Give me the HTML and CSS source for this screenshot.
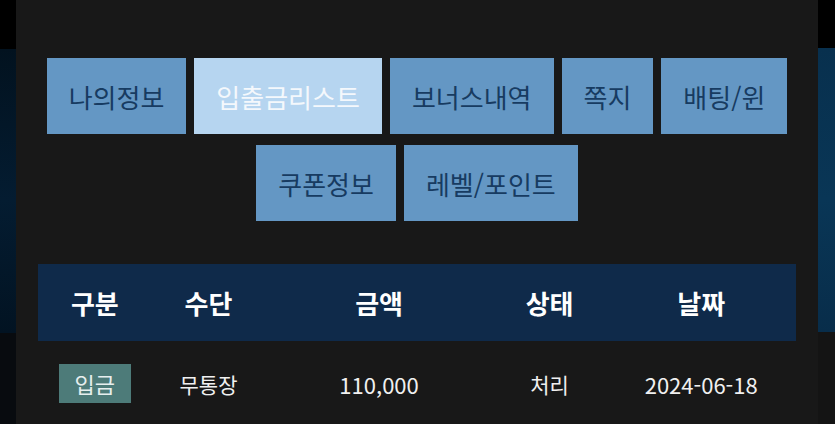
FILE: index.html
```html
<!DOCTYPE html>
<html lang="ko">
<head>
	<meta charset="UTF-8">
	<title>마이페이지</title>
	<link rel="stylesheet" href="styles.css">
</head>
<body>
	<div id="main_frame">
		<div class="tabs">
			<a class="tab">나의정보</a>
			<a class="tab on">입출금리스트</a>
			<a class="tab">보너스내역</a>
			<a class="tab">쪽지</a>
			<a class="tab">배팅/윈</a>
			<a class="tab">쿠폰정보</a>
			<a class="tab">레벨/포인트</a>
		</div>

		<div class="list">
			<div class="row head">
				<div>구분</div>
				<div>수단</div>
				<div>금액</div>
				<div>상태</div>
				<div>날짜</div>
			</div>
			<div class="row">
				<div><span class="badge">입금</span></div>
				<div>무통장</div>
				<div class="num">110,000</div>
				<div>처리</div>
				<div class="num">2024-06-18</div>
			</div>
		</div>
	</div>
</body>
</html>
```

FILE: styles.css
```css
* {
	margin: 0;
	padding: 0;
	box-sizing: border-box;
}

body {
	font-family: "Noto Sans CJK KR", "Noto Sans", sans-serif;
	height: 424px;
	overflow: hidden;
	background:
		linear-gradient(to bottom, #000 0 49px, #02121f 49px, #041c31 200px, #021322 333px, #080b0f 333px) left top / 50% 100% no-repeat,
		linear-gradient(to bottom, #000 0 48px, #08304e 48px, #093656 200px, #082d4a 332px, #141414 332px) right top / 50% 100% no-repeat;
}

#main_frame {
	width: 802px;
	height: 424px;
	margin-left: 16px;
	padding: 58px 22px 0;
	background-color: #181818;
}

.tabs {
	display: flex;
	flex-wrap: wrap;
	justify-content: center;
	gap: 11px 8px;
}

.tab {
	display: flex;
	align-items: center;
	height: 76px;
	padding: 0 22px;
	font-size: 26px;
	color: #173b61;
	background: #6497c4;
	cursor: pointer;
}

.tab.on {
	background: #b6d5f0;
	color: #f4f8fc;
}

.list {
	margin-top: 43px;
}

.row {
	display: grid;
	grid-template-columns: 15% 15% 30% 15% 25%;
	align-items: center;
	text-align: center;
	color: #f0f0f0;
	font-size: 21px;
	height: 85px;
}

.row .num {
	font-size: 22px;
}

.row.head {
	height: 77px;
	background: #0f2a4a;
	font-size: 26px;
	font-weight: bold;
	color: #fff;
}

.badge {
	display: inline-block;
	height: 39px;
	line-height: 39px;
	padding: 0 16px;
	font-size: 22px;
	background: #4d7b79;
	color: #e6eeee;
}
```
